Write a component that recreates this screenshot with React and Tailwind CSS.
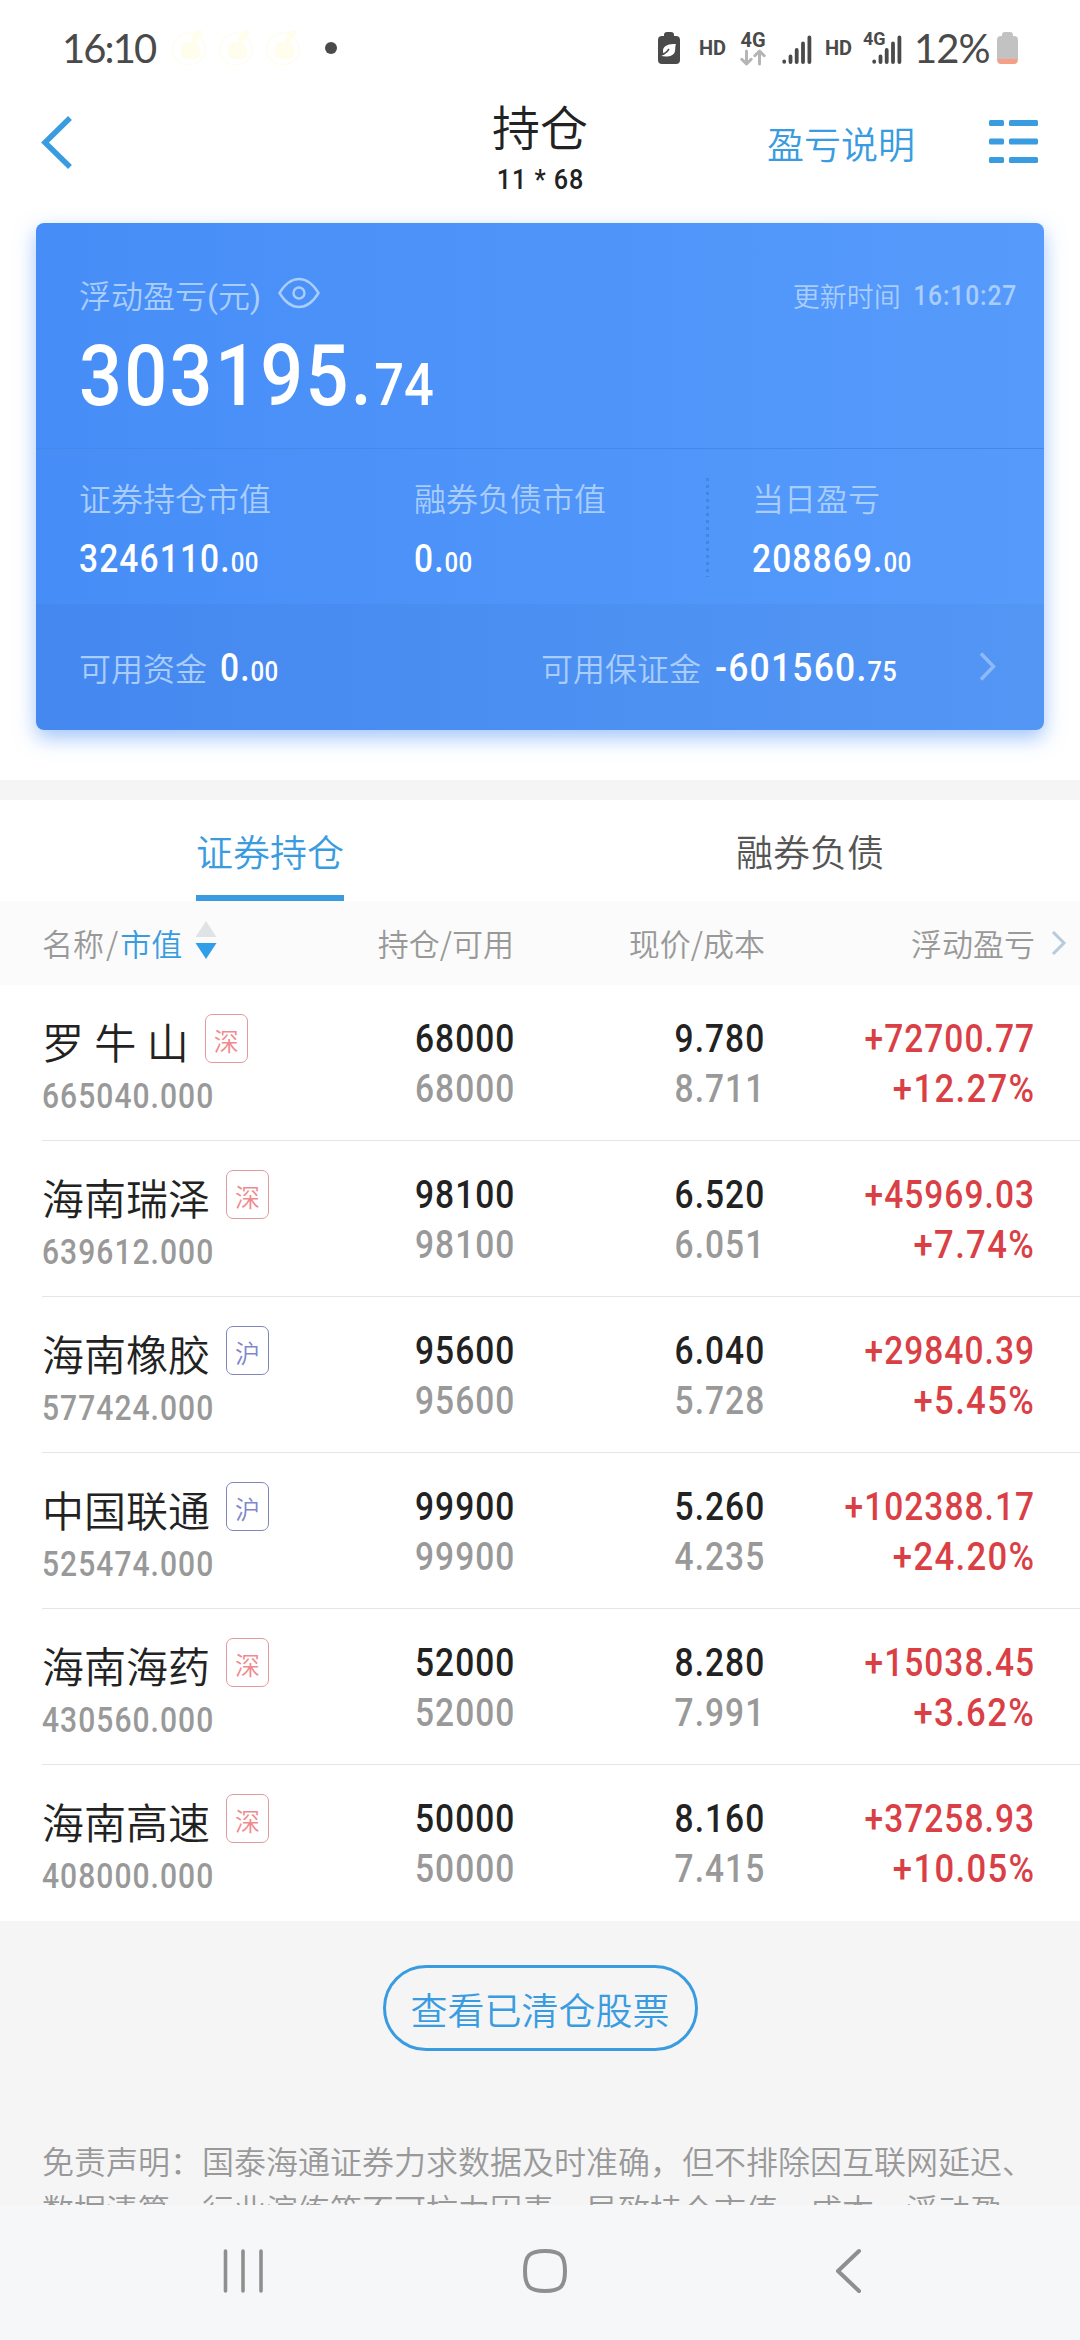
const HOLDINGS = [
  { name: "罗 牛 山", market: "深", value: "665040.000", qty: "68000", avail: "68000", price: "9.780", cost: "8.711", profit: "+72700.77", rate: "+12.27%" },
  { name: "海南瑞泽", market: "深", value: "639612.000", qty: "98100", avail: "98100", price: "6.520", cost: "6.051", profit: "+45969.03", rate: "+7.74%" },
  { name: "海南橡胶", market: "沪", value: "577424.000", qty: "95600", avail: "95600", price: "6.040", cost: "5.728", profit: "+29840.39", rate: "+5.45%" },
  { name: "中国联通", market: "沪", value: "525474.000", qty: "99900", avail: "99900", price: "5.260", cost: "4.235", profit: "+102388.17", rate: "+24.20%" },
  { name: "海南海药", market: "深", value: "430560.000", qty: "52000", avail: "52000", price: "8.280", cost: "7.991", profit: "+15038.45", rate: "+3.62%" },
  { name: "海南高速", market: "深", value: "408000.000", qty: "50000", avail: "50000", price: "8.160", cost: "7.415", profit: "+37258.93", rate: "+10.05%" },
]

// Narrow digits, squeezed towards the given side
function Num({ children, right, className = "" }) {
  return (
    <span className={`inline-block whitespace-pre font-['Roboto',sans-serif] font-medium ${right ? "origin-right" : "origin-left"} ${className}`}>
      {children}
    </span>
  )
}

function Amount({ value, className = "" }) {
  const [int, dec] = value.split(".")
  return (
    <Num className={`text-[39px] leading-[44px] text-white scale-x-[0.86] tracking-[1.3px] ${className}`}>
      {int}.<span className="text-[28px] tracking-[0.3px]">{dec}</span>
    </Num>
  )
}

function Signal() {
  return (
    <svg width="30" height="30" viewBox="0 0 30 30" stroke="#4a4a4a" strokeWidth="3.8" strokeLinecap="round">
      <path d="M2.2 26.5v.3M8.5 21.5v5.5M14.7 15v12M21 8.5v18.5M27.4 2.5v24.5" />
    </svg>
  )
}

function FruitIcon() {
  return (
    <svg width="34" height="40" viewBox="0 0 34 40" fill="none">
      <circle cx="17" cy="21" r="16" stroke="#fefdf0" strokeWidth="1.5" />
      <path d="M10 15c3-1 6-1 9 0 0-6 2-10 5-12l6-1c0 5-2 8-5 10l-1 4c4 2 5 7 3 13-3 3-14 3-17 0-2-4-2-10 0-14z" fill="#fffdec" />
    </svg>
  )
}

function StatusBar() {
  return (
    <div className="h-24 flex items-center pl-[62px] text-[#4a4a4a]">
      <span className="w-[95px] font-['Lato',sans-serif] font-normal text-[40px] leading-[48px] whitespace-nowrap tracking-[-1.9px]">16:10</span>
      <div className="flex gap-[13px] ml-[15px]">
        <FruitIcon />
        <FruitIcon />
        <FruitIcon />
      </div>
      <div className="w-3 h-3 rounded-full bg-[#4a4a4a] ml-[25px]" />
      <svg className="ml-[321px]" width="22" height="32" viewBox="0 0 22 32">
        <path d="M6 3q0-3 3-3h4q3 0 3 3v1h2q4 0 4 4v20q0 4-4 4H4q-4 0-4-4V8q0-4 4-4h2z" fill="#4a4a4a" />
        <path d="M18 12c-7 0-12 1-13 6 0 2 0 3 1 4l-3 2c5 1 13 1 14-5 .5-2.5 0-5 1-7z" fill="#fff" />
        <path d="M3 23c4-1 6-3 8-6" stroke="#4a4a4a" strokeWidth="1.5" fill="none" />
      </svg>
      <span className="ml-[19px] w-[27px] font-['Roboto',sans-serif] font-bold text-[20px] leading-6">HD</span>
      <div className="ml-[14px] w-[26px] flex flex-col items-center">
        <span className="font-['Roboto',sans-serif] font-bold text-[20px] leading-[18px]">4G</span>
        <svg width="26" height="17" viewBox="0 0 26 17" fill="none" stroke="#b5b5b5" strokeWidth="3" strokeLinecap="round" strokeLinejoin="round">
          <path d="M6.5 2v13M1.8 10.3 6.5 15l4.7-4.7M19.5 15V2M14.8 6.7 19.5 2l4.7 4.7" />
        </svg>
      </div>
      <div className="ml-[16px] mt-1"><Signal /></div>
      <span className="ml-[13px] w-[27px] font-['Roboto',sans-serif] font-bold text-[20px] leading-6">HD</span>
      <div className="relative ml-[20px] mt-1">
        <Signal />
        <span className="absolute -left-[9px] -top-[6px] font-['Roboto',sans-serif] font-bold text-[18px] leading-5 bg-white h-[17px] w-[21px]">4G</span>
      </div>
      <span className="ml-[12px] w-[80px] font-['Lato',sans-serif] font-normal text-[40px] leading-[48px] whitespace-nowrap tracking-[-1px]">12%</span>
      <svg className="ml-[3px]" width="21" height="32" viewBox="0 0 21 32">
        <path d="M5 3q0-3 3-3h5q3 0 3 3v1h1q4 0 4 4v19H0V8q0-4 4-4h1z" fill="#c2c2c2" />
        <path d="M0 27h21q0 5-4 5H4q-4 0-4-5z" fill="#f59f87" />
      </svg>
    </div>
  )
}

function Header() {
  return (
    <div className="h-[127px] grid grid-cols-3">
      <div className="pl-10 pt-[18px]">
        <svg width="34" height="56" viewBox="0 0 34 56" fill="none" stroke="#3a9ce0" strokeWidth="5.5">
          <path d="M30 4 5 28.5 30 53" />
        </svg>
      </div>
      <div className="flex flex-col items-center text-[#222]">
        <h1 className="text-[48px] leading-[58px]">持仓</h1>
        <Num className="text-[28px] leading-8 mt-[10px] origin-center! scale-x-[0.9] tracking-[1px]">11 * 68</Num>
      </div>
      <div className="flex pl-[47px] pt-[25px]">
        <span className="text-[37px] leading-[44px] text-[#3a9ce0]">盈亏说明</span>
        <svg className="ml-[74px] -mt-px" width="50" height="46" viewBox="0 0 50 46" fill="#3a9ce0">
          <rect x="0" y="0" width="15" height="6" rx="1.5" /><rect x="20" y="0" width="29" height="6" rx="1.5" />
          <rect x="0" y="18.5" width="15" height="6" rx="1.5" /><rect x="20" y="18.5" width="29" height="6" rx="1.5" />
          <rect x="0" y="37" width="15" height="6" rx="1.5" /><rect x="20" y="37" width="29" height="6" rx="1.5" />
        </svg>
      </div>
    </div>
  )
}

function SummaryItem({ label, value }) {
  return (
    <div className="flex flex-col items-start pt-[28px]">
      <span className="text-[32px] leading-10 text-[#a9cdfc]">{label}</span>
      <div className="mt-[20px] h-[44px] flex"><Amount value={value} /></div>
    </div>
  )
}

function SummaryCard() {
  return (
    <div className="mx-9 h-[507px] rounded-lg overflow-clip bg-linear-to-r from-[#468df7] to-[#569bfb] shadow-[0_8px_20px_rgba(70,141,247,0.5)]">
      <div className="h-[226px] border-b border-[#4687e8] pl-[43px] pr-[27px]">
        <div className="flex items-center pt-[51px] text-[#a9cdfc]">
          <span className="text-[32px] leading-10">浮动盈亏<span className="font-['Roboto',sans-serif] font-normal">(</span>元<span className="font-['Roboto',sans-serif] font-normal">)</span></span>
          <svg className="ml-[17px] -mt-[6px]" width="42" height="32" viewBox="0 0 42 32" fill="none" stroke="#a9cdfc" strokeWidth="2.4">
            <path d="M1.5 16C7 7 13.5 2 21 2s14 5 19.5 14C35 25 28.5 30 21 30S7 25 1.5 16z" />
            <circle cx="21" cy="16" r="5.5" />
          </svg>
          <div className="ml-auto flex items-center">
            <span className="text-[27px] leading-10 -mr-[2px]">更新时间</span>
            <Num right className="text-[28px] leading-10 scale-x-[0.88] tracking-[1px]">16:10:27</Num>
          </div>
        </div>
        <Num className="mt-[19px] text-[85px] leading-[80px] text-white scale-x-[0.89] tracking-[2.6px]">303195.<span className="text-[59px] tracking-[0px]">74</span></Num>
      </div>
      <div className="h-[155px] flex pl-[43px]">
        <div className="w-[335px]"><SummaryItem label="证券持仓市值" value="3246110.00" /></div>
        <div className="w-[292px]"><SummaryItem label="融券负债市值" value="0.00" /></div>
        <div className="mt-[29px] h-[99px] w-[3px] bg-[repeating-linear-gradient(to_bottom,#4384e6_0_3px,transparent_3px_7px)]" />
        <div className="ml-[43px]"><SummaryItem label="当日盈亏" value="208869.00" /></div>
      </div>
      <div className="h-[126px] bg-[#1e3c6e]/[0.05] flex items-center pl-[43px] text-[32px] leading-10 text-[#a9cdfc]">
        <div className="w-[462px] flex items-center gap-[13px]">
          <span>可用资金</span>
          <Amount value="0.00" className="mt-[5px]" />
        </div>
        <span className="mr-[14px]">可用保证金</span>
        <div className="w-[264px] flex"><Amount value="-601560.75" className="mt-[5px] scale-x-[0.91]!" /></div>
        <svg width="18" height="30" viewBox="0 0 18 30" fill="none" stroke="#8dbafb" strokeWidth="3.5">
          <path d="M2 1.5 14.5 14.5 2 27.5" />
        </svg>
      </div>
    </div>
  )
}

function Cell({ top, bottom, className, red }) {
  return (
    <div className={`${className} pt-[29px] flex flex-col items-end text-[38.5px] leading-[50px]`}>
      <Num right className={`scale-x-[0.87] tracking-[1.2px] ${red ? "text-[#d93f45]" : "text-[#222]"}`}>{top}</Num>
      <Num right className={red ? "text-[#d93f45] scale-x-[0.9] tracking-[1.5px]" : "text-[#999] scale-x-[0.87] tracking-[1.2px]"}>{bottom}</Num>
    </div>
  )
}

function HoldingRow({ item, last }) {
  const badge = item.market === "深" ? "border-[#e39a9c] text-[#f08a8e]" : "border-[#8087b8] text-[#7f86cc]"
  return (
    <div className={`ml-[42px] h-[156px] flex ${last ? "" : "border-b border-[#e6e6e6]"}`}>
      <div className="w-[231px] pt-[26px]">
        <div className="flex items-start">
          <span className="text-[42px] leading-[60px] text-[#222] whitespace-pre [word-spacing:1px]">{item.name}</span>
          <span className={`ml-[16px] mt-[3px] w-[43px] h-[49px] border rounded-[7px] text-[25px] leading-[50px] text-center ${badge}`}>{item.market}</span>
        </div>
        <Num className="mt-[7px] block text-[34.5px] leading-9 text-[#999] scale-x-[0.87] tracking-[1.2px]">{item.value}</Num>
      </div>
      <Cell top={item.qty} bottom={item.avail} className="w-[242px]" />
      <Cell top={item.price} bottom={item.cost} className="w-[250px]" />
      <Cell top={item.profit} bottom={item.rate} className="w-[270px]" red />
    </div>
  )
}

function NavBar() {
  return (
    <div className="h-[135px] bg-[#f6f7f9] flex items-start pt-[43px] pl-[222px]">
      <svg width="42" height="46" viewBox="0 0 42 46" stroke="#8f8f8f" strokeWidth="3.6" strokeLinecap="round">
        <path d="M3.5 3v40M21 3v40M39 3v40" />
      </svg>
      <svg className="ml-[258px]" width="46" height="46" viewBox="0 0 46 46" fill="none" stroke="#8f8f8f" strokeWidth="4">
        <path d="M23 3c15.5 0 20 4.5 20 20s-4.5 20-20 20S3 38.5 3 23 7.5 3 23 3z" />
      </svg>
      <svg className="ml-[266px]" width="30" height="46" viewBox="0 0 30 46" fill="none" stroke="#8f8f8f" strokeWidth="4" strokeLinecap="round" strokeLinejoin="round">
        <path d="M25 3 4 23l21 20" />
      </svg>
    </div>
  )
}

export default function App() {
  return (
    <div className="w-[1080px] h-[2340px] flex flex-col overflow-hidden bg-white font-['Noto_Sans_CJK_SC',sans-serif] font-[350]">
      <StatusBar />
      <Header />
      <SummaryCard />
      <div className="mt-[50px] h-5 bg-[#f5f5f5]" />

      <div className="h-[101px] grid grid-cols-2 justify-items-center text-[37px] leading-[102px]">
        <div className="h-[101px] border-b-[6px] border-[#3a9ce0] text-[#3a9ce0]">证券持仓</div>
        <div className="text-[#555]">融券负债</div>
      </div>

      <div className="h-[84px] bg-[#fbfbfb] flex items-center pl-[42px] text-[31px] leading-[84px] text-[#999]">
        <div className="w-[231px] flex items-center">
          <span>名称<span className="px-[2px]">/</span><span className="text-[#3a9ce0]">市值</span></span>
          <svg className="ml-[13px] -mt-[6px] shrink-0" width="22" height="38" viewBox="0 0 22 38">
            <path d="M11 0 21.5 16H.5z" fill="#dfe3e6" />
            <path d="M11 38 21.5 22H.5z" fill="#2f9fe8" />
          </svg>
        </div>
        <span className="w-[241px] text-right">持仓/可用</span>
        <span className="w-[251px] text-right">现价/成本</span>
        <span className="w-[270px] text-right">浮动盈亏</span>
        <svg className="ml-[16px]" width="16" height="26" viewBox="0 0 16 26" fill="none" stroke="#b9cadb" strokeWidth="3">
          <path d="M2 2l11 11L2 24" />
        </svg>
      </div>

      {HOLDINGS.map((item, i) => (
        <HoldingRow key={item.name} item={item} last={i === HOLDINGS.length - 1} />
      ))}

      <div className="flex-1 min-h-0 overflow-hidden bg-[#f5f5f6]">
        <button className="block mx-auto mt-[44px] w-[315px] h-[86px] rounded-full border-[3px] border-[#3a9ce0] text-[#3a9ce0] text-[37px] leading-[82px]">
          查看已清仓股票
        </button>
        <p className="mt-[85px] pl-[42px] text-[32px] leading-[48px] text-[#999] whitespace-nowrap">
          免责声明：国泰海通证券力求数据及时准确，但不排除因互联网延迟、<br />
          数据清算、行业演练等不可抗力因素，导致持仓市值、成本、浮动盈
        </p>
      </div>
      <NavBar />
    </div>
  )
}
